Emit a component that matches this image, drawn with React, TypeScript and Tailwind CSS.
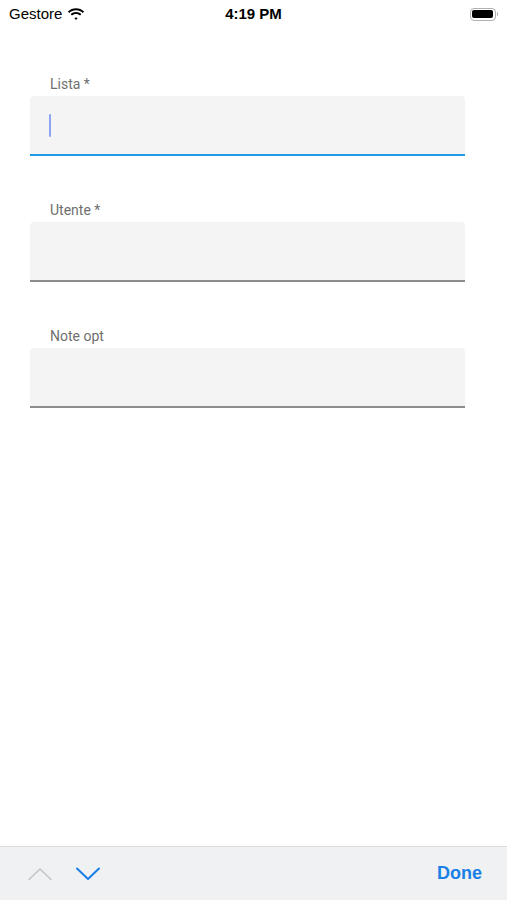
const fields = [
  { label: 'Lista *', focused: true },
  { label: 'Utente *', focused: false },
  { label: 'Note opt', focused: false },
];

function StatusBar() {
  return (
    <div className="h-[28px] flex items-center justify-between px-[9px] relative text-[15px] text-black">
      <div className="flex items-center gap-[5px]">
        <span>Gestore</span>
        <svg width="18" height="13" viewBox="0 0 18 13" fill="black">
          <path d="M9 2.2c2.6 0 5 1 6.8 2.7l1.3-1.4C14.9 1.4 12.1.2 9 .2S3.1 1.4.9 3.5l1.3 1.4C4 3.2 6.4 2.2 9 2.2z" />
          <path d="M9 5.9c1.6 0 3 .6 4.1 1.6l1.3-1.4C13 4.7 11.1 3.9 9 3.9S5 4.7 3.6 6.1l1.3 1.4C6 6.5 7.4 5.9 9 5.9z" />
          <path d="M9 9.4c.7 0 1.3.3 1.7.7L9 12 7.3 10.1c.4-.4 1-.7 1.7-.7z" />
        </svg>
      </div>
      <span className="absolute left-1/2 -translate-x-1/2 font-semibold">4:19 PM</span>
      <div className="flex items-center">
        <div className="w-[26px] h-[13px] rounded-[4px] border border-[#b0b0b0] p-[1.5px]">
          <div className="w-full h-full bg-black rounded-[2px]" />
        </div>
        <div className="w-[1.5px] h-[4px] bg-[#b0b0b0] rounded-r-sm ml-[1px]" />
      </div>
    </div>
  );
}

export default function App() {
  return (
    <div
      className="w-[507px] h-[900px] bg-white flex flex-col"
      style={{ fontFamily: 'Roboto, "Liberation Sans", sans-serif' }}
    >
      <div style={{ fontFamily: '"Liberation Sans", Arial, sans-serif' }}>
        <StatusBar />
      </div>

      <div className="flex-1 flex flex-col gap-[46px] pt-[48px] ml-[30px] w-[435px]">
        {fields.map((f) => (
          <div key={f.label} className="flex flex-col gap-[4px]">
            <label className="pl-[20px] text-[14px] leading-[16px] text-[#6f6f6f]">{f.label}</label>
            <div
              className={`h-[60px] bg-[#f4f4f4] rounded-t-[4px] flex items-center pl-[19px] border-b-2 ${
                f.focused ? 'border-[#1e9de6]' : 'border-[#8c8c8c]'
              }`}
            >
              {f.focused && <div className="w-[2px] h-[23px] bg-[#8ea4f2] rounded-full" />}
            </div>
          </div>
        ))}
      </div>

      <div
        className="h-[54px] bg-[#f0f1f2] border-t border-[#dcdcdc] flex items-center px-[28px]"
        style={{ fontFamily: '"Liberation Sans", Arial, sans-serif' }}
      >
        <svg width="24" height="14" viewBox="0 0 24 14" fill="none">
          <path d="M1 12.5 12 2l11 10.5" stroke="#c4c4c4" strokeWidth="1.6" strokeLinecap="round" strokeLinejoin="round" />
        </svg>
        <svg width="24" height="14" viewBox="0 0 24 14" fill="none" className="ml-[24px]">
          <path d="M1 1.5 12 12 23 1.5" stroke="#1a7fe6" strokeWidth="2" strokeLinecap="round" strokeLinejoin="round" />
        </svg>
        <span className="ml-auto text-[18px] font-bold text-[#1a7fe6] mr-[-3px]">Done</span>
      </div>
    </div>
  );
}
